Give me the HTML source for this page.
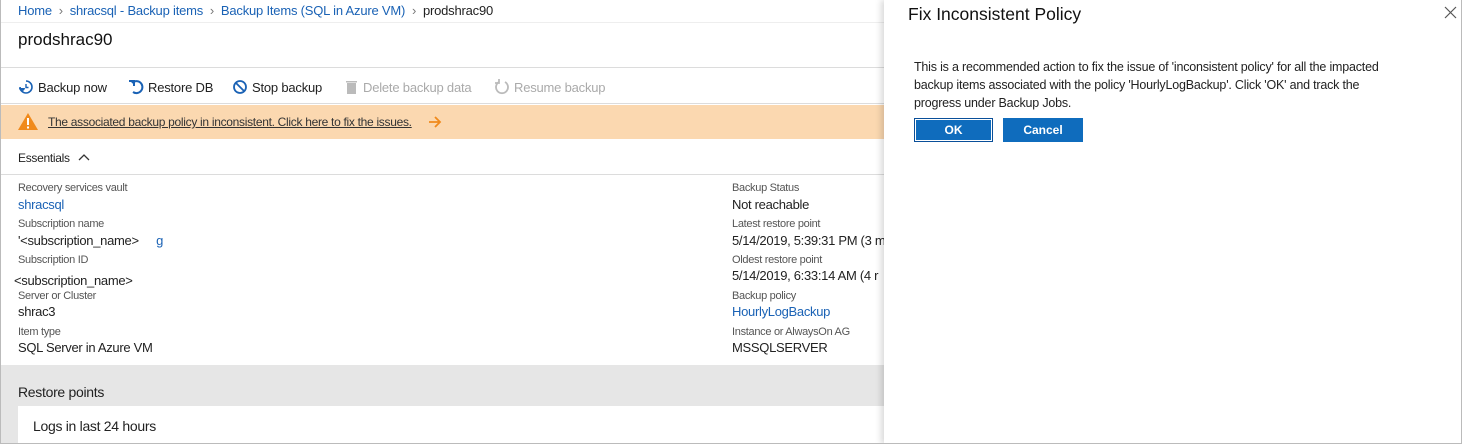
<!DOCTYPE html>
<html><head><meta charset="utf-8"><style>
*{margin:0;padding:0;box-sizing:border-box}
body{width:1462px;height:444px;overflow:hidden;background:#fff;font-family:"Liberation Sans",sans-serif;color:#222;position:relative}
.a{position:absolute;white-space:nowrap}
.blue{color:#1a62b5 !important}
.lbl{font-size:11px;color:#555;letter-spacing:-0.3px}
.val{font-size:13px;color:#222;letter-spacing:-0.3px}
.hr{position:absolute;left:0;width:884px;height:1px;background:#dcdcdc}
.tb{font-size:13px;letter-spacing:-0.2px}
.tb svg{vertical-align:-3px;margin-right:4px}
</style></head><body>
<div style="position:absolute;left:0;top:0;width:1462px;height:444px;border:1px solid #bbb;border-top:none;pointer-events:none;z-index:5"></div>
<div class="a" style="left:18px;top:3px;font-size:13px;letter-spacing:-0.2px"><span class="blue">Home</span> <span style="color:#777">&nbsp;›&nbsp;</span> <span class="blue">shracsql - Backup items</span> <span style="color:#777">&nbsp;›&nbsp;</span> <span class="blue">Backup Items (SQL in Azure VM)</span> <span style="color:#777">&nbsp;›&nbsp;</span> prodshrac90</div>
<div class="hr" style="top:22px;background:#eee"></div>
<div class="a" style="left:18px;top:30px;font-size:17px;color:#111">prodshrac90</div>
<div class="hr" style="top:67px"></div>
<div class="a tb" style="left:18px;top:79px"><svg width="16" height="16"><path d="M8 2a6 6 0 1 1-6 6" fill="none" stroke="#1a62b5" stroke-width="1.6"/><path d="M8 5v3.5h2.5" fill="none" stroke="#1a62b5" stroke-width="1.4"/><path d="M1 9a3 3 0 0 0 6 0" fill="#1a62b5"/></svg>Backup now</div>
<div class="a tb" style="left:128px;top:79px"><svg width="16" height="16"><path d="M4 4a6 6 0 1 1 1 9" fill="none" stroke="#1a62b5" stroke-width="2"/><path d="M1 2h5v5" fill="none" stroke="#1a62b5" stroke-width="2"/></svg>Restore DB</div>
<div class="a tb" style="left:232px;top:79px"><svg width="16" height="16"><circle cx="8" cy="8" r="6" fill="none" stroke="#1a62b5" stroke-width="1.8"/><path d="M4 4l8 8" stroke="#1a62b5" stroke-width="1.8"/></svg>Stop backup</div>
<div class="a tb" style="left:345px;top:79px;color:#aaa"><svg width="14" height="16"><rect x="2" y="4" width="9" height="11" fill="#bbb"/><rect x="1" y="2" width="11" height="1.5" fill="#bbb"/></svg>Delete backup data</div>
<div class="a tb" style="left:494px;top:79px;color:#aaa"><svg width="16" height="16"><path d="M11 3a6 6 0 1 1-6 0" fill="none" stroke="#bbb" stroke-width="1.8"/><path d="M5 0v4h-4" fill="none" stroke="#bbb" stroke-width="1.8"/></svg>Resume backup</div>
<div class="hr" style="top:103px"></div>
<div style="position:absolute;left:0;top:105px;width:884px;height:34px;background:#fbd8b0"></div>
<svg class="a" style="left:17px;top:112px" width="22" height="19"><path d="M11 1 L21 18 L1 18 Z" fill="#f08a1c"/><rect x="10" y="6" width="2" height="7" fill="#fff"/><rect x="10" y="14.5" width="2" height="2" fill="#fff"/></svg>
<div class="a" style="left:48px;top:115px;font-size:12px;text-decoration:underline;color:#333;letter-spacing:-0.3px">The associated backup policy in inconsistent. Click here to fix the issues.</div>
<svg class="a" style="left:428px;top:116px" width="14" height="12"><path d="M1 6h11M7 1l5 5-5 5" fill="none" stroke="#f08a1c" stroke-width="1.8"/></svg>
<div class="a" style="left:18px;top:151px;font-size:12px;letter-spacing:-0.3px">Essentials</div>
<svg class="a" style="left:78px;top:153px" width="12" height="8"><path d="M1 7l5-5 5 5" fill="none" stroke="#333" stroke-width="1.3"/></svg>
<div class="hr" style="top:174px"></div>
<div class="a lbl" style="left:18px;top:182px">Recovery services vault</div>
<div class="a val blue" style="left:18px;top:197px">shracsql</div>
<div class="a lbl" style="left:18px;top:218px">Subscription name</div>
<div class="a val" style="left:18px;top:233px">'&lt;subscription_name&gt; <span class="blue" style="margin-left:14px">g</span></div>
<div class="a lbl" style="left:18px;top:254px">Subscription ID</div>
<div class="a val" style="left:14px;top:273px">&lt;subscription_name&gt;</div>
<div class="a lbl" style="left:18px;top:290px">Server or Cluster</div>
<div class="a val" style="left:18px;top:304px">shrac3</div>
<div class="a lbl" style="left:18px;top:326px">Item type</div>
<div class="a val" style="left:18px;top:340px">SQL Server in Azure VM</div>
<div class="a lbl" style="left:732px;top:182px">Backup Status</div>
<div class="a val" style="left:732px;top:197px">Not reachable</div>
<div class="a lbl" style="left:732px;top:218px">Latest restore point</div>
<div class="a val" style="left:732px;top:233px">5/14/2019, 5:39:31 PM (3 m</div>
<div class="a lbl" style="left:732px;top:254px">Oldest restore point</div>
<div class="a val" style="left:732px;top:268px">5/14/2019, 6:33:14 AM (4 r</div>
<div class="a lbl" style="left:732px;top:290px">Backup policy</div>
<div class="a val blue" style="left:732px;top:304px">HourlyLogBackup</div>
<div class="a lbl" style="left:732px;top:326px">Instance or AlwaysOn AG</div>
<div class="a val" style="left:732px;top:340px">MSSQLSERVER</div>
<div style="position:absolute;left:0;top:365px;width:884px;height:79px;background:#e6e6e6"></div>
<div class="a" style="left:18px;top:384px;font-size:14px;letter-spacing:-0.3px">Restore points</div>
<div style="position:absolute;left:18px;top:406px;width:866px;height:38px;background:#fff"></div>
<div class="a" style="left:33px;top:418px;font-size:14px;letter-spacing:-0.3px">Logs in last 24 hours</div>
<div style="position:absolute;left:884px;top:0;width:578px;height:444px;background:#fff;box-shadow:-3px 0 6px rgba(0,0,0,0.15)"></div>
<div class="a" style="left:908px;top:4px;font-size:17.5px;color:#111">Fix Inconsistent Policy</div>
<svg class="a" style="left:1444px;top:6px" width="13" height="13"><path d="M1 1L12 12M12 1L1 12" stroke="#555" stroke-width="1.2"/></svg>
<div class="a" style="left:914px;top:58px;font-size:12.5px;line-height:18px;color:#222;white-space:normal;width:478px;letter-spacing:-0.2px">This is a recommended action to fix the issue of 'inconsistent policy' for all the impacted backup items associated with the policy 'HourlyLogBackup'. Click 'OK' and track the progress under Backup Jobs.</div>
<div style="position:absolute;left:914px;top:118px;width:79px;height:24px;background:#0f6cbd;border:1px solid #0a4f99;box-shadow:inset 0 0 0 1px #fff;color:#fff;font-size:12px;font-weight:bold;text-align:center;line-height:22px">OK</div>
<div style="position:absolute;left:1003px;top:118px;width:80px;height:24px;background:#0f6cbd;color:#fff;font-size:12px;font-weight:bold;text-align:center;line-height:24px">Cancel</div>
</body></html>
